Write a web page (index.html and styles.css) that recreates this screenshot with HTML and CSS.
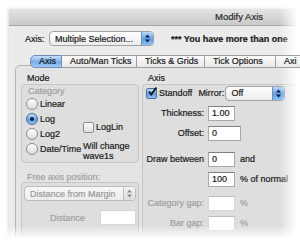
FILE: index.html
```html
<!DOCTYPE html>
<html lang="en">
<head>
    <meta charset="UTF-8">
    <meta name="viewport" content="width=device-width, initial-scale=1.0">
    <title>Modify Axis</title>
    <link rel="stylesheet" href="styles.css">
</head>
<body>
<div class="shot">
    <div class="window">
        <div class="titlebar">Modify Axis</div>

        <div class="axis-row">
            <span class="label">Axis:</span>
            <div class="popup axis-popup">
                <span class="popup-text">Multiple Selection...</span>
                <span class="popup-arrows"><svg width="7" height="9" viewBox="0 0 7 9"><path d="M3.5 0.5 L6 3.5 L1 3.5 Z M3.5 8.5 L6 5.5 L1 5.5 Z" fill="#0b1d3a"/></svg></span>
            </div>
            <span class="note">*** You have more than one</span>
        </div>

        <div class="tabs">
            <div class="tab active">Axis</div>
            <div class="tab">Auto/Man Ticks</div>
            <div class="tab">Ticks &amp; Grids</div>
            <div class="tab">Tick Options</div>
            <div class="tab last">Axi</div>
        </div>

        <div class="panel">
            <!-- left column: mode + free axis -->
            <div class="left">
                <div class="caption">Mode</div>
                <div class="group mode-group">
                    <div class="radios">
                        <div class="muted cat">Category</div>
                        <div class="radio"><span class="dot"></span>Linear</div>
                        <div class="radio"><span class="dot on"></span>Log</div>
                        <div class="radio"><span class="dot"></span>Log2</div>
                        <div class="radio"><span class="dot"></span>Date/Time</div>
                    </div>
                    <div class="extra">
                        <div class="check"><span class="box"></span>LogLin</div>
                        <div class="hint">Will change<br>wave1s</div>
                    </div>
                </div>

                <div class="caption muted free">Free axis position:</div>
                <div class="group pos-group">
                    <div class="popup off-popup">
                        <span class="popup-text">Distance from Margin</span>
                        <span class="popup-arrows grey"><svg width="7" height="9" viewBox="0 0 7 9"><path d="M3.5 0.5 L6 3.5 L1 3.5 Z M3.5 8.5 L6 5.5 L1 5.5 Z" fill="#8a8a8a"/></svg></span>
                    </div>
                    <div class="dist-row">
                        <span class="muted">Distance</span>
                        <span class="field dist-field"></span>
                    </div>
                </div>
            </div>

            <!-- right column: axis options -->
            <div class="right">
                <div class="caption">Axis</div>
                <div class="group axis-group">
                    <div class="standoff-row">
                        <span class="box checked"><svg width="10" height="10" viewBox="0 0 10 10"><path d="M2 4.5 L4.2 7.5 L9.5 0.5" stroke="#111" stroke-width="1.8" fill="none"/></svg></span>
                        <span>Standoff</span>
                        <span class="mirror">Mirror:</span>
                        <div class="popup mirror-popup">
                            <span class="popup-text">Off</span>
                            <span class="popup-arrows"><svg width="7" height="9" viewBox="0 0 7 9"><path d="M3.5 0.5 L6 3.5 L1 3.5 Z M3.5 8.5 L6 5.5 L1 5.5 Z" fill="#0b1d3a"/></svg></span>
                        </div>
                    </div>
                    <div class="row">
                        <span class="row-label">Thickness:</span>
                        <span class="field">1.00</span>
                    </div>
                    <div class="row">
                        <span class="row-label">Offset:</span>
                        <span class="field wide">0</span>
                    </div>
                    <div class="row spaced">
                        <span class="row-label">Draw between</span>
                        <span class="field">0</span>
                        <span class="unit">and</span>
                    </div>
                    <div class="row">
                        <span class="row-label"></span>
                        <span class="field">100</span>
                        <span class="unit">% of normal</span>
                    </div>
                    <div class="row spaced-sm">
                        <span class="row-label muted">Category gap:</span>
                        <span class="field off"></span>
                        <span class="unit muted">%</span>
                    </div>
                    <div class="row">
                        <span class="row-label muted">Bar gap:</span>
                        <span class="field off"></span>
                        <span class="unit muted">%</span>
                    </div>
                </div>
            </div>
        </div>
    </div>

    <div class="fade-right"></div>
    <div class="fade-bottom"></div>
</div>
</body>
</html>
```

FILE: styles.css
```css
body {
    margin: 0;
    background: #fff;
    font-family: "Liberation Sans", Arial, sans-serif;
    font-size: 9px;
    color: #1a1a1a;
    -webkit-text-stroke: 0.2px;
}

.shot {
    position: relative;
    width: 300px;
    height: 242px;
    overflow: hidden;
}

.window {
    margin: 9px 0 0 9px;
    width: 460px;
    height: 260px;
    background: #ebebeb;
    box-shadow: -1px 0 3px rgba(0, 0, 0, 0.15);
}

.titlebar {
    height: 16px;
    line-height: 16px;
    text-align: center;
    font-size: 9.5px;
    color: #2a2a2a;
    background: linear-gradient(#e4e4e4, #c9c9c9);
    border-bottom: 1px solid #a8a8a8;
}

/* top row with the axis popup */
.axis-row {
    display: flex;
    align-items: center;
    height: 15px;
    margin-top: 5px;
    padding-left: 16px;
}

.label {
    width: 24px;
}

.note {
    margin-left: 17px;
    font-weight: bold;
    white-space: nowrap;
}

.popup {
    display: flex;
    align-items: center;
    height: 13px;
    border: 1px solid #a2a2a2;
    border-radius: 4px;
    background: linear-gradient(#ffffff, #ececec);
    overflow: hidden;
}

.popup-text {
    flex: 1;
    padding-left: 5px;
    white-space: nowrap;
}

.popup-arrows {
    display: flex;
    align-items: center;
    justify-content: center;
    width: 11px;
    height: 13px;
    background: linear-gradient(#b9d8f8, #5f9fe8 55%, #8cc0f4);
    border-left: 1px solid #6f8fb8;
}

.popup-arrows.grey {
    background: linear-gradient(#f4f4f4, #dedede);
    border-left-color: #bdbdbd;
}

.axis-popup {
    width: 103px;
}

/* tabs */
.tabs {
    display: flex;
    height: 12px;
    margin: 9px 0 -2px 21px;
    position: relative;
    z-index: 1;
}

.tab {
    height: 11px;
    line-height: 11px;
    padding: 0 8px;
    border: 1px solid #a0a0a0;
    border-left: none;
    background: linear-gradient(#fdfdfd, #e8e8e8);
    white-space: nowrap;
}

.tab.active {
    width: 14px;
    border-left: 1px solid #6d8cb6;
    border-color: #6d8cb6;
    border-radius: 5px 0 0 5px;
    background: linear-gradient(#c6e0fa, #74acec 55%, #a1cbf5);
}

.tab:nth-child(2) { width: 58px; }
.tab:nth-child(3) { width: 51px; }
.tab:nth-child(4) { width: 54px; }
.tab.last { width: 40px; }

/* tab panel */
.panel {
    display: flex;
    margin-left: 6px;
    height: 200px;
    padding: 7px 0 0 5px;
    border: 1px solid #b4b4b4;
    border-radius: 5px 0 0 0;
    background: #e4e4e4;
}

.caption {
    height: 11px;
    line-height: 11px;
    padding-left: 6px;
}

.muted {
    color: #a0a0a0;
}

.group {
    border: 1px solid #c6c6c6;
    border-radius: 4px;
    background: #dedede;
}

.left {
    width: 118px;
}

.mode-group {
    display: flex;
    height: 76px;
    padding: 1px 0 0 4px;
}

.radios {
    width: 57px;
}

.cat {
    height: 10px;
    line-height: 10px;
    padding-left: 2px;
}

.radio {
    display: flex;
    align-items: center;
    gap: 2px;
    height: 15px;
}

.dot {
    width: 10px;
    height: 10px;
    border: 1px solid #8d8d8d;
    border-radius: 50%;
    background: linear-gradient(#ffffff, #dcdcdc);
    display: flex;
    align-items: center;
    justify-content: center;
}

.dot.on {
    border-color: #4a6e9e;
    background: linear-gradient(#c2defa, #5f9de6 60%, #9ac6f4);
}

.dot.on::after {
    content: "";
    width: 4px;
    height: 4px;
    border-radius: 50%;
    background: #10203a;
}

.extra {
    padding-top: 35px;
}

.check {
    display: flex;
    align-items: center;
    gap: 2px;
    height: 12px;
}

.box {
    width: 9px;
    height: 9px;
    border: 1px solid #8d8d8d;
    border-radius: 2px;
    background: linear-gradient(#ffffff, #dcdcdc);
}

.box.checked {
    position: relative;
    border-color: #4a6e9e;
    background: linear-gradient(#c2defa, #5f9de6 60%, #9ac6f4);
}

.box.checked svg {
    position: absolute;
    left: 0;
    top: -2px;
}

.hint {
    margin-top: 8px;
    line-height: 10px;
}

.free {
    margin-top: 9px;
    height: 10px;
    line-height: 10px;
}

.pos-group {
    height: 60px;
    padding: 3px 2px 0 2px;
}

.off-popup {
    color: #9a9a9a;
    background: linear-gradient(#f8f8f8, #ececec);
    border-color: #bcbcbc;
}

.dist-row {
    display: flex;
    align-items: center;
    margin-top: 9px;
    padding-left: 26px;
    gap: 15px;
}

.field {
    width: 22px;
    height: 13px;
    line-height: 13px;
    padding-left: 3px;
    background: #fff;
    border: 1px solid #a8a8a8;
    border-top-color: #808080;
}

.dist-field {
    width: 32px;
    border-color: #d6d6d6;
}

.field.wide {
    width: 28px;
}

.field.off {
    border-color: #d8d8d8;
    border-top-color: #bcbcbc;
}

/* right column */
.right {
    width: 170px;
    margin-left: 3px;
}

.axis-group {
    display: flex;
    flex-direction: column;
    gap: 6px;
    height: 180px;
    padding: 1px 0 0 3px;
    border-right: none;
    border-radius: 4px 0 0 4px;
}

.standoff-row {
    display: flex;
    align-items: center;
    height: 14px;
    gap: 2px;
}

.mirror {
    margin-left: 4px;
    width: 25px;
}

.mirror-popup {
    width: 58px;
}

.row {
    display: flex;
    align-items: center;
    height: 14px;
}

.row.spaced {
    margin-top: 6px;
}

.row.spaced-sm {
    margin-top: 4px;
}

.row-label {
    width: 58px;
    margin-right: 4px;
    text-align: right;
    white-space: nowrap;
}

.unit {
    margin-left: 5px;
    white-space: nowrap;
}

/* soft fade at the edges of the screenshot */
.fade-right {
    position: absolute;
    top: 0;
    right: 0;
    width: 20px;
    height: 242px;
    background: linear-gradient(to right, rgba(255, 255, 255, 0), #fff 85%);
}

.fade-bottom {
    position: absolute;
    left: 0;
    bottom: 0;
    width: 300px;
    height: 16px;
    background: linear-gradient(rgba(255, 255, 255, 0), #fff 80%);
}
```
